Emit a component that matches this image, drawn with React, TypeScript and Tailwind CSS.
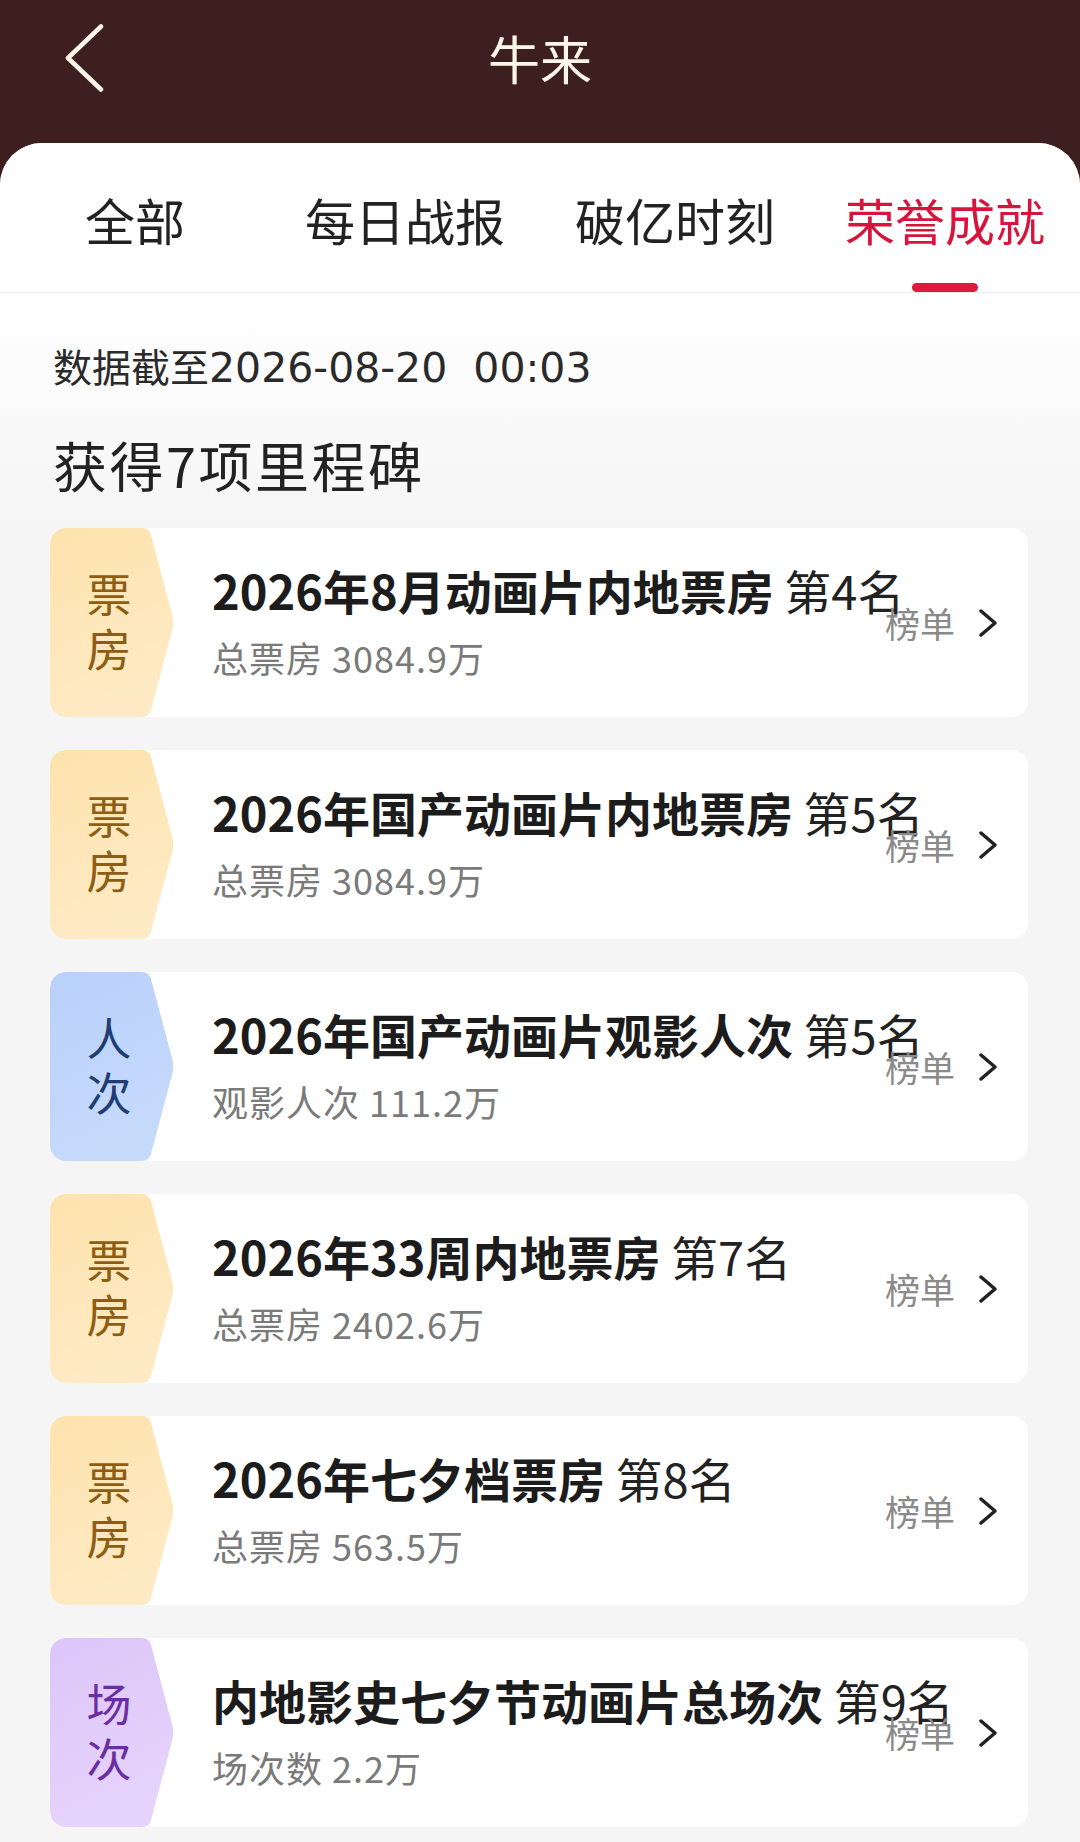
import React from "react";

type Kind = "box" | "people" | "shows";

const badgeStyles: Record<Kind, { from: string; to: string; text: string; label: [string, string] }> = {
  box: { from: "#fde3ad", to: "#feeac4", text: "text-[#8d5d14]", label: ["票", "房"] },
  people: { from: "#b9d0fa", to: "#c6dafc", text: "text-[#1f3c73]", label: ["人", "次"] },
  shows: { from: "#dcc5f9", to: "#e6d3fb", text: "text-[#6a2ea3]", label: ["场", "次"] },
};

const items: { kind: Kind; title: string; rank: string; sub: string }[] = [
  { kind: "box", title: "2026年8月动画片内地票房", rank: "第4名", sub: "总票房 3084.9万" },
  { kind: "box", title: "2026年国产动画片内地票房", rank: "第5名", sub: "总票房 3084.9万" },
  { kind: "people", title: "2026年国产动画片观影人次", rank: "第5名", sub: "观影人次 111.2万" },
  { kind: "box", title: "2026年33周内地票房", rank: "第7名", sub: "总票房 2402.6万" },
  { kind: "box", title: "2026年七夕档票房", rank: "第8名", sub: "总票房 563.5万" },
  { kind: "shows", title: "内地影史七夕节动画片总场次", rank: "第9名", sub: "场次数 2.2万" },
];

const tabs = ["全部", "每日战报", "破亿时刻", "荣誉成就"];

function Badge({ kind, id }: { kind: Kind; id: number }) {
  const s = badgeStyles[kind];
  const gid = `badge-grad-${id}`;
  return (
    <div className="relative w-[124px] h-full shrink-0">
      <svg className="absolute inset-0" width="124" height="189" viewBox="0 0 124 189">
        <defs>
          <linearGradient id={gid} x1="0" y1="0" x2="0.3" y2="1">
            <stop offset="0" stopColor={s.from} />
            <stop offset="1" stopColor={s.to} />
          </linearGradient>
        </defs>
        <path
          d="M16 0 H92 Q99 0 101 7 L122.5 88 Q124 94.5 122.5 101 L101 182 Q99 189 92 189 H16 Q0 189 0 173 V16 Q0 0 16 0 Z"
          fill={`url(#${gid})`}
        />
      </svg>
      <div className={`relative h-full flex flex-col items-center justify-center pr-[6px] pb-[6px] text-[45px] leading-[55px] ${s.text}`}>
        <span>{s.label[0]}</span>
        <span>{s.label[1]}</span>
      </div>
    </div>
  );
}

export default function App() {
  return (
    <div className="min-h-[1842px] bg-[#3e1f1f] font-['Noto_Sans_CJK_SC','Noto_Sans',sans-serif]">
      <header className="h-[143px]">
        <div className="h-[116px] grid grid-cols-[1fr_auto_1fr] items-center">
          <div className="pl-[64px]">
            <svg width="40" height="70" viewBox="0 0 40 70" fill="none">
              <polyline
                points="37,3.5 4,35 37,66.5"
                stroke="#fff6ea"
                strokeWidth="4.5"
                strokeLinecap="round"
                strokeLinejoin="round"
              />
            </svg>
          </div>
          <h1 className="text-[52px] leading-[60px] text-[#fff6ea]">牛来</h1>
          <div />
        </div>
      </header>

      <main className="rounded-t-[42px] overflow-hidden bg-[#f5f5f5] min-h-[1699px]">
        <nav className="grid grid-cols-4 h-[150px] bg-white border-b border-[#ededed]">
          {tabs.map((t, i) => {
            const active = i === tabs.length - 1;
            return (
              <div key={t} className="flex flex-col items-center pt-[50px]">
                <span
                  className={`text-[50px] leading-[52px] ${active ? "text-[#d7153c]" : "text-[#222222]"}`}
                >
                  {t}
                </span>
                {active && <div className="mt-[38px] w-[66px] h-[9px] rounded-full bg-[#e01a3e]" />}
              </div>
            );
          })}
        </nav>

        <section className="bg-linear-to-b from-white to-[#f5f5f5] pl-[53px] pt-[48px] pb-[33px]">
          <p className="text-[39px] leading-[48px] text-[#2a2a2a] whitespace-pre">
            数据截至
            <span className="font-['DejaVu_Sans',sans-serif] text-[41px]">{"2026-08-20  00:03"}</span>
          </p>
          <h2 className="mt-[43px] text-[54px] leading-[60px] tracking-[2.5px] text-[#222222]">获得7项里程碑</h2>
        </section>

        <div className="flex flex-col gap-[33px] pl-[50px] pr-[52px] pb-[20px]">
          {items.map((it, i) => (
            <div key={i} className="flex h-[189px] rounded-[16px] bg-white overflow-hidden">
              <Badge kind={it.kind} id={i} />
              <div className="flex-1 min-w-0 pl-[38px] pb-[5px] flex flex-col justify-center">
                <div className="whitespace-nowrap text-[47px] leading-[56px] font-bold text-[#1c1c1c]">
                  {it.title} <span className="font-normal text-[#222222]">{it.rank}</span>
                </div>
                <div className="mt-[17px] whitespace-nowrap text-[36px] leading-[44px] tracking-[1px] text-[#7a7a7a]">{it.sub}</div>
              </div>
              <div className="shrink-0 flex items-center pr-[31px]">
                <span className="text-[35px] leading-[44px] text-[#8a8a8a]">榜单</span>
                <svg className="ml-[24px]" width="18" height="28" viewBox="0 0 18 28" fill="none">
                  <polyline
                    points="2,2 16,14 2,26"
                    stroke="#222222"
                    strokeWidth="3.5"
                    strokeLinecap="round"
                    strokeLinejoin="round"
                  />
                </svg>
              </div>
            </div>
          ))}
        </div>
      </main>
    </div>
  );
}
